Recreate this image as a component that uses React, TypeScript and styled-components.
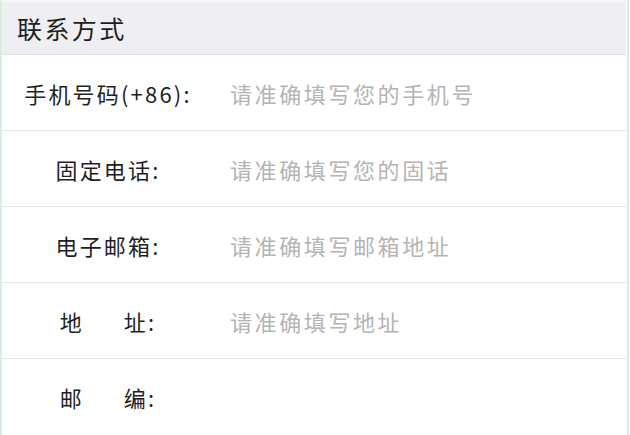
import * as React from "react";
import styled, { createGlobalStyle } from "styled-components";

const GlobalStyle = createGlobalStyle`
  html, body {
    margin: 0;
    padding: 0;
    background: #ffffff;
  }
  body {
    font-family: "Noto Sans CJK SC", "Noto Sans", sans-serif;
    color: #222222;
  }
`;

const Frame = styled.div`
  box-sizing: border-box;
  width: 630px;
  height: 435px;
  overflow: hidden;
  display: flex;
  background: #ffffff;
`;

const EdgeLine = styled.div<{ $gap: number }>`
  width: 2px;
  flex: none;
  background: #dbeedb;
  margin-left: ${(p) => p.$gap}px;
`;

const Panel = styled.div`
  flex: 1;
  display: flex;
  flex-direction: column;
`;

const Header = styled.div`
  box-sizing: border-box;
  height: 58px;
  padding-left: 15px;
  display: flex;
  align-items: center;
  background: #efeff3;
  border-top: 2px solid #f6f6f8;
  border-bottom: 1px solid #e2e2e6;
  font-size: 25px;
  letter-spacing: 2.4px;
  color: #1e1e1e;
`;

const Row = styled.div`
  box-sizing: border-box;
  height: 76px;
  flex: none;
  display: flex;
  align-items: center;
  border-bottom: 1px solid #e6e6e6;
  &:last-child {
    border-bottom: none;
  }
`;

const Label = styled.div`
  width: 212px;
  flex: none;
  text-align: center;
  font-size: 22px;
  letter-spacing: 2.2px;
  color: #1f1f1f;
  white-space: nowrap;
`;

const Gap = styled.span`
  display: inline-block;
  width: 40px;
`;

const Hint = styled.div`
  padding-left: 16px;
  font-size: 22px;
  letter-spacing: 2.6px;
  color: #b4b4b4;
  white-space: nowrap;
`;

interface Field {
  label: React.ReactNode;
  hint?: string;
}

const fields: Field[] = [
  { label: "手机号码(+86):", hint: "请准确填写您的手机号" },
  { label: "固定电话:", hint: "请准确填写您的固话" },
  { label: "电子邮箱:", hint: "请准确填写邮箱地址" },
  {
    label: (
      <>
        地<Gap />址:
      </>
    ),
    hint: "请准确填写地址",
  },
  {
    label: (
      <>
        邮<Gap />编:
      </>
    ),
  },
];

const App: React.FC = () => (
  <>
    <GlobalStyle />
    <Frame>
      <EdgeLine $gap={0} />
      <Panel>
        <Header>联系方式</Header>
        {fields.map((f, i) => (
          <Row key={i}>
            <Label>{f.label}</Label>
            {f.hint && <Hint>{f.hint}</Hint>}
          </Row>
        ))}
      </Panel>
      <EdgeLine $gap={1} />
      <div style={{ width: 1 }} />
    </Frame>
  </>
);

export default App;
